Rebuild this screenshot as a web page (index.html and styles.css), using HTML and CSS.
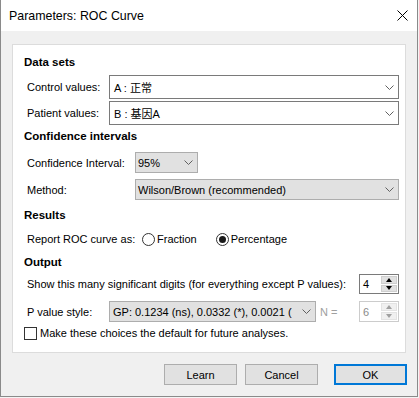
FILE: index.html
```html
<!DOCTYPE html>
<html lang="en">
<head>
    <meta charset="UTF-8">
    <meta name="viewport" content="width=device-width, initial-scale=1.0">
    <title>Parameters: ROC Curve</title>
    <link rel="stylesheet" href="styles.css">
</head>
<body>
    <div class="window">
        <!-- title bar -->
        <div class="titlebar">
            <span class="title">Parameters: ROC Curve</span>
            <svg class="close" width="11" height="11" viewBox="0 0 11 11">
                <path d="M0.5 0.5 L10.5 10.5 M10.5 0.5 L0.5 10.5" stroke="#000" stroke-width="1" fill="none"/>
            </svg>
        </div>

        <div class="client">
            <div class="panel">
                <div class="heading h-first">Data sets</div>
                <div class="row r-control">
                    <span class="lbl lbl-data">Control values:</span>
                    <div class="combo combo-white combo-data">
                        <span class="combo-text">A : 正常</span>
                        <svg class="chev" width="9" height="5" viewBox="0 0 9 5"><path d="M0.5 0.5 L4.5 4.5 L8.5 0.5" stroke="#606060" fill="none"/></svg>
                    </div>
                </div>
                <div class="row r-patient">
                    <span class="lbl lbl-data">Patient values:</span>
                    <div class="combo combo-white combo-data">
                        <span class="combo-text">B : 基因A</span>
                        <svg class="chev" width="9" height="5" viewBox="0 0 9 5"><path d="M0.5 0.5 L4.5 4.5 L8.5 0.5" stroke="#606060" fill="none"/></svg>
                    </div>
                </div>

                <div class="heading h-ci">Confidence intervals</div>
                <div class="row r-ci">
                    <span class="lbl lbl-ci">Confidence Interval:</span>
                    <div class="combo combo-gray combo-pct">
                        <span class="combo-text">95%</span>
                        <svg class="chev" width="9" height="5" viewBox="0 0 9 5"><path d="M0.5 0.5 L4.5 4.5 L8.5 0.5" stroke="#606060" fill="none"/></svg>
                    </div>
                </div>
                <div class="row r-method">
                    <span class="lbl lbl-ci">Method:</span>
                    <div class="combo combo-gray combo-method">
                        <span class="combo-text">Wilson/Brown (recommended)</span>
                        <svg class="chev" width="9" height="5" viewBox="0 0 9 5"><path d="M0.5 0.5 L4.5 4.5 L8.5 0.5" stroke="#606060" fill="none"/></svg>
                    </div>
                </div>

                <div class="heading h-results">Results</div>
                <div class="row r-radio">
                    <span class="lbl lbl-radio">Report ROC curve as:</span>
                    <span class="radio"></span>
                    <span class="opt opt-fraction">Fraction</span>
                    <span class="radio radio-on"></span>
                    <span class="opt">Percentage</span>
                </div>

                <div class="heading h-output">Output</div>
                <div class="row r-digits">
                    <span class="lbl lbl-digits">Show this many significant digits (for everything except P values):</span>
                    <div class="spin">
                        <span class="spin-text">4</span>
                        <div class="spin-btns">
                            <div class="spin-btn"><span class="arr-up"></span></div>
                            <div class="spin-btn"><span class="arr-down"></span></div>
                        </div>
                    </div>
                </div>
                <div class="row r-pvalue">
                    <span class="lbl lbl-data">P value style:</span>
                    <div class="combo combo-gray combo-p">
                        <span class="combo-text">GP: 0.1234 (ns), 0.0332 (*), 0.0021 (</span>
                        <svg class="chev" width="9" height="5" viewBox="0 0 9 5"><path d="M0.5 0.5 L4.5 4.5 L8.5 0.5" stroke="#606060" fill="none"/></svg>
                    </div>
                    <span class="n-eq">N =</span>
                    <div class="spin spin-off">
                        <span class="spin-text">6</span>
                        <div class="spin-btns">
                            <div class="spin-btn"><span class="arr-up"></span></div>
                            <div class="spin-btn"><span class="arr-down"></span></div>
                        </div>
                    </div>
                </div>
                <div class="row r-check">
                    <span class="check"></span>
                    <span class="opt">Make these choices the default for future analyses.</span>
                </div>
            </div>

            <div class="buttons">
                <button class="btn">Learn</button>
                <button class="btn btn-cancel">Cancel</button>
                <button class="btn btn-ok">OK</button>
            </div>
        </div>
    </div>
</body>
</html>
```

FILE: styles.css
```css
/* dialog window */
body {
    margin: 0;
    background: #f4f4f4;
    font-family: "Liberation Sans", Arial, "Noto Sans CJK SC", sans-serif;
    font-size: 11px;
    color: #000;
}
.window {
    width: 418px;
    height: 397px;
    box-sizing: border-box;
    border: 1px solid #8a8a8a;
    border-top: none;
    background: #f0f0f0;
    display: flex;
    flex-direction: column;
}
.titlebar {
    height: 31px;
    background: #fff;
    display: flex;
    align-items: center;
    padding: 0 8px 0 8px;
}
.title {
    font-size: 12.4px;
    flex: 1;
}
.close {
    margin-right: 1px;
    margin-top: -1px;
}
.client {
    padding: 13px 11px 0 11px;
}

/* white group panel */
.panel {
    background: #fff;
    border: 1px solid #dcdcdc;
    height: 309px;
    box-sizing: border-box;
    padding: 8px 6px 0 11px;
    display: flex;
    flex-direction: column;
}
.heading {
    height: 18px;
    display: flex;
    align-items: center;
    font-weight: bold;
    font-size: 11.5px;
}
.h-ci { margin-top: 2px; }
.h-results { margin-top: 6px; }
.h-output { margin-top: 5px; }

.row {
    display: flex;
    align-items: center;
    padding-left: 3px;
}
.r-control { height: 24px; margin-top: 4px; }
.r-patient { height: 24px; margin-top: 2px; }
.r-ci { height: 21px; margin-top: 7px; }
.r-method { height: 21px; margin-top: 6px; }
.r-radio { height: 18px; margin-top: 6px; }
.r-digits { height: 20px; margin-top: 3px; }
.r-pvalue { height: 21px; margin-top: 7px; }
.r-check { height: 16px; margin-top: 3px; padding-left: 0; }

.lbl { flex: none; }
.lbl-data { width: 82px; }
.lbl-ci { width: 108px; }
.lbl-radio { width: 115px; }
.lbl-digits { width: 332px; }

/* combo boxes */
.combo {
    height: 100%;
    box-sizing: border-box;
    display: flex;
    align-items: center;
    border: 1px solid #7a7a7a;
    padding-left: 4px;
    padding-right: 4px;
}
.combo-white { background: #fff; }
.combo-gray {
    background: #e1e1e1;
    border-color: #adadad;
    padding-left: 2px;
}
.combo-data { flex: 1; }
.combo-pct { width: 63px; }
.combo-method { flex: 1; }
.combo-p {
    width: 207px;
    padding-left: 3px;
}
.combo-text {
    flex: 1;
    white-space: nowrap;
}
.chev { flex: none; }

/* radio and check */
.radio {
    width: 13px;
    height: 13px;
    box-sizing: border-box;
    border: 1px solid #333;
    border-radius: 50%;
    background: #fff;
    display: flex;
    align-items: center;
    justify-content: center;
    margin-right: 2px;
}
.radio-on::after {
    content: "";
    width: 7px;
    height: 7px;
    border-radius: 50%;
    background: #1a1a1a;
}
.opt-fraction { margin-right: 19px; }
.check {
    width: 13px;
    height: 13px;
    box-sizing: border-box;
    border: 1px solid #333;
    background: #fff;
    margin-right: 3px;
}

/* spinner */
.spin {
    width: 40px;
    height: 20px;
    box-sizing: border-box;
    border: 1px solid #7a7a7a;
    background: #fff;
    display: flex;
    margin-left: auto;
}
.r-pvalue .spin { height: 21px; }
.spin-text {
    flex: 1;
    padding-left: 3px;
    display: flex;
    align-items: center;
}
.spin-btns {
    width: 16px;
    display: flex;
    flex-direction: column;
    padding: 1px 1px 1px 0;
    gap: 1px;
}
.spin-btn {
    flex: 1;
    background: #e1e1e1;
    border: 1px solid #cfcfcf;
    display: flex;
    align-items: center;
    justify-content: center;
}
.arr-up {
    width: 0;
    height: 0;
    border-left: 3.5px solid transparent;
    border-right: 3.5px solid transparent;
    border-bottom: 4px solid #000;
}
.arr-down {
    width: 0;
    height: 0;
    border-left: 3.5px solid transparent;
    border-right: 3.5px solid transparent;
    border-top: 4px solid #000;
}
.spin-off {
    border-color: #cccccc;
}
.spin-off .spin-text { color: #8a8a8a; }
.spin-off .spin-btn {
    background: #f0f0f0;
    border-color: #e3e3e3;
}
.spin-off .arr-up { border-bottom-color: #a0a0a0; }
.spin-off .arr-down { border-top-color: #a0a0a0; }
.n-eq {
    color: #a0a0a0;
    margin-left: 4px;
    white-space: nowrap;
}

/* bottom buttons */
.buttons {
    display: flex;
    justify-content: flex-end;
    margin-top: 11px;
}
.btn {
    width: 73px;
    height: 21px;
    box-sizing: border-box;
    border: 1px solid #adadad;
    background: #e1e1e1;
    font-family: "Liberation Sans", Arial, sans-serif;
    font-size: 11px;
    color: #000;
    padding: 0;
}
.btn-cancel { margin-left: 8px; }
.btn-ok {
    margin-left: 16px;
    border: 2px solid #0078d7;
    margin-right: -1px;
}
```
